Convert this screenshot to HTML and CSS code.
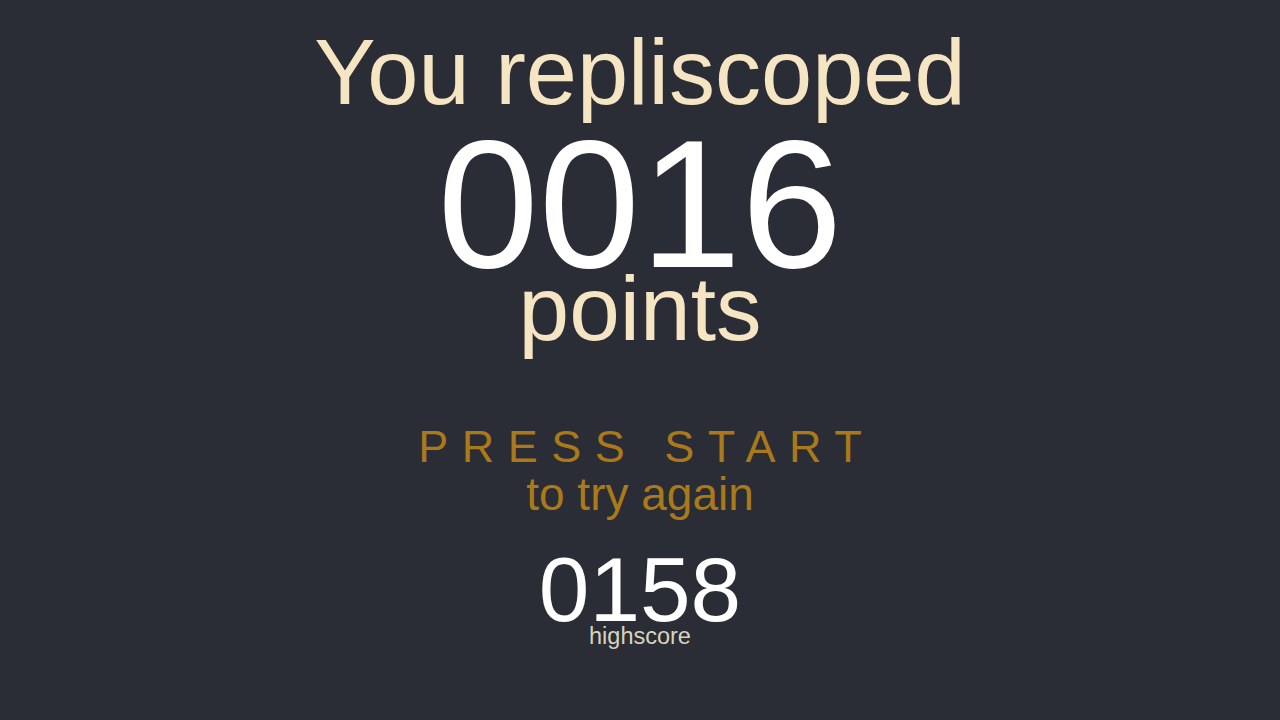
FILE: index.html
```html
<!DOCTYPE html>
<html>
<head>
<meta charset="utf-8">
<link rel="stylesheet" href="styles.css">
</head>
<body>
<main class="screen">
  <div class="title">You repliscoped</div>
  <div class="score">0016</div>
  <div class="points">points</div>
  <div class="press">PRESS START</div>
  <div class="again">to try again</div>
  <div class="high">0158</div>
  <div class="high-label">highscore</div>
</main>
</body>
</html>
```
FILE: styles.css
```css
html, body {
  margin: 0;
  padding: 0;
  background: #2a2d35;
  height: 100%;
}
.screen {
  display: flex;
  flex-direction: column;
  align-items: center;
  padding-top: 32px;
  font-family: "Liberation Sans", Arial, sans-serif;
}
.title {
  font-size: 92px;
  line-height: 80px;
  color: #f5e5c2;
}
.score {
  font-size: 182px;
  line-height: 130px;
  color: #ffffff;
  margin-top: 27px;
}
.points {
  font-size: 91px;
  line-height: 70px;
  color: #f5e5c2;
  margin-top: 4.5px;
}
.press {
  font-size: 45px;
  line-height: 45px;
  color: #a9791a;
  letter-spacing: 13.5px;
  margin-right: -13.5px;
  margin-top: 80.5px;
}
.again {
  font-size: 46px;
  line-height: 46px;
  color: #a9791a;
  margin-top: 2px;
}
.high {
  font-size: 91px;
  line-height: 72px;
  color: #ffffff;
  margin-top: 36.5px;
}
.high-label {
  font-size: 23.5px;
  line-height: 18px;
  color: #d9d3bd;
  margin-top: 1.5px;
}
```
